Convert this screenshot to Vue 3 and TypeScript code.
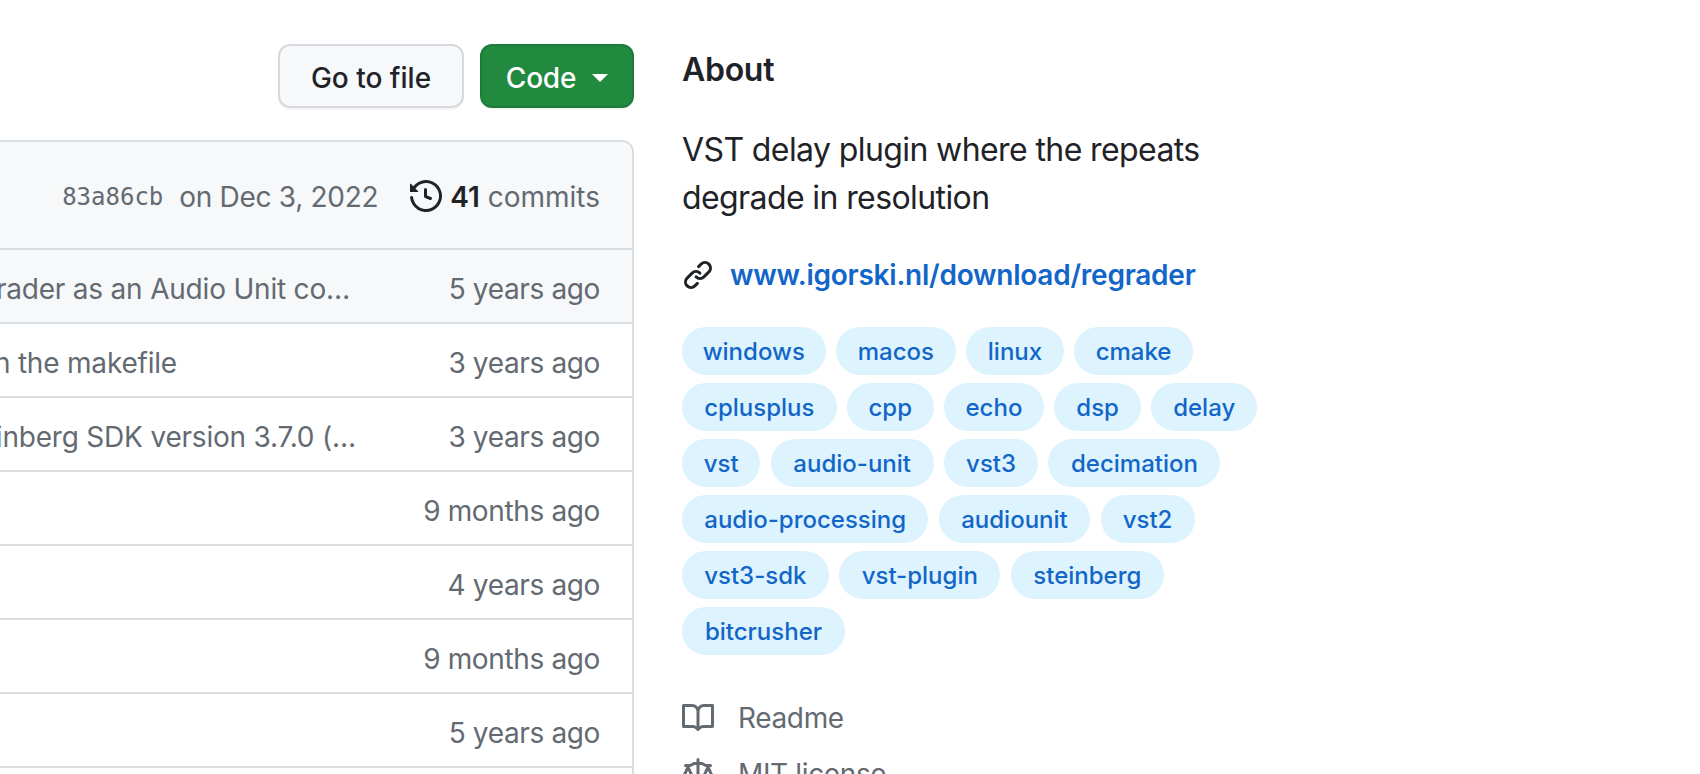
<script setup lang="ts">
interface Row { msg: string; time: string; end: number; hover?: boolean }
const rows: Row[] = [
  { msg: 'Add Regrader as an Audio Unit co…', time: '5 years ago', end: 350, hover: true },
  { msg: 'Clean up in the makefile', time: '3 years ago', end: 177 },
  { msg: 'Update to Steinberg SDK version 3.7.0 (…', time: '3 years ago', end: 356 },
  { msg: '', time: '9 months ago', end: 0 },
  { msg: '', time: '4 years ago', end: 0 },
  { msg: '', time: '9 months ago', end: 0 },
  { msg: '', time: '5 years ago', end: 0 },
  { msg: '', time: '', end: 0 },
]
const topics: [string, number][] = [
  ['windows', 143.5], ['macos', 120], ['linux', 97.4], ['cmake', 119],
  ['cplusplus', 154.6], ['cpp', 86.6], ['echo', 100], ['dsp', 86.6], ['delay', 105.7],
  ['vst', 78.3], ['audio-unit', 163], ['vst3', 94], ['decimation', 172],
  ['audio-processing', 246.4], ['audiounit', 151.4], ['vst2', 94],
  ['vst3-sdk', 146.7], ['vst-plugin', 161.4], ['steinberg', 153],
  ['bitcrusher', 163],
]
</script>

<template>
  <div class="page">
    <main class="left">
      <div class="actions">
        <button class="btn">Go to file</button>
        <button class="btn primary">Code<span class="caret"></span></button>
      </div>
      <section class="box">
        <div class="head">
          <span class="sha">83a86cb</span>
          <span class="date">on Dec 3, 2022</span>
          <svg class="hist" viewBox="0 0 16 16" width="32" height="32"><path d="m.427 1.927 1.215 1.215a8.002 8.002 0 1 1-1.6 5.685.75.75 0 1 1 1.493-.154 6.5 6.5 0 1 0 1.18-4.458l1.358 1.358A.25.25 0 0 1 3.896 6H.25A.25.25 0 0 1 0 5.75V2.104a.25.25 0 0 1 .427-.177ZM7.75 4a.75.75 0 0 1 .75.75v2.992l2.028.812a.75.75 0 0 1-.557 1.392l-2.5-1A.751.751 0 0 1 7 8.25v-3.5A.75.75 0 0 1 7.75 4Z"/></svg>
          <span class="commits"><b>41</b> commits</span>
        </div>
        <div v-for="(r, i) in rows" :key="i" class="row" :class="{ hover: r.hover }">
          <div class="msg" :style="{ width: r.end + 'px' }"><span v-if="r.msg">{{ r.msg }}</span></div>
          <div class="time">{{ r.time }}</div>
        </div>
      </section>
    </main>
    <aside class="about">
      <h2>About</h2>
      <p class="desc">VST delay plugin where the repeats degrade in resolution</p>
      <div class="link">
        <svg viewBox="0 0 16 16" width="32" height="32"><path d="m7.775 3.275 1.25-1.25a3.5 3.5 0 1 1 4.95 4.95l-2.5 2.5a3.5 3.5 0 0 1-4.95 0 .751.751 0 0 1 .018-1.042.751.751 0 0 1 1.042-.018 1.998 1.998 0 0 0 2.83 0l2.5-2.5a2.002 2.002 0 0 0-2.83-2.83l-1.25 1.25a.751.751 0 0 1-1.042-.018.751.751 0 0 1-.018-1.042Zm-4.69 9.64a1.998 1.998 0 0 0 2.83 0l1.25-1.25a.751.751 0 0 1 1.042.018.751.751 0 0 1 .018 1.042l-1.25 1.25a3.5 3.5 0 1 1-4.95-4.95l2.5-2.5a3.5 3.5 0 0 1 4.95 0 .751.751 0 0 1-.018 1.042.751.751 0 0 1-1.042.018 1.998 1.998 0 0 0-2.83 0l-2.5 2.5a1.998 1.998 0 0 0 0 2.83Z"/></svg>
        <a>www.igorski.nl/download/regrader</a>
      </div>
      <div class="topics">
        <span v-for="[t, w] in topics" :key="t" class="topic" :style="{ width: w + 'px' }">{{ t }}</span>
      </div>
      <div class="meta first">
        <svg viewBox="0 0 16 16" width="32" height="32"><path d="M0 1.75A.75.75 0 0 1 .75 1h4.253c1.227 0 2.317.59 3 1.501A3.743 3.743 0 0 1 11.006 1h4.245a.75.75 0 0 1 .75.75v10.5a.75.75 0 0 1-.75.75h-4.507a2.25 2.25 0 0 0-1.591.659l-.622.621a.75.75 0 0 1-1.06 0l-.622-.621A2.25 2.25 0 0 0 5.258 13H.75a.75.75 0 0 1-.75-.75Zm7.251 10.324.004-5.073-.002-2.253A2.25 2.25 0 0 0 5.003 2.5H1.5v9h3.757a3.75 3.75 0 0 1 1.994.574ZM8.755 4.75l-.004 7.322a3.752 3.752 0 0 1 1.992-.572H14.5v-9h-3.495a2.25 2.25 0 0 0-2.25 2.25Z"/></svg>
        <span>Readme</span>
      </div>
      <div class="meta">
        <svg viewBox="0 0 16 16" width="32" height="32"><path d="M8.75.75V2h.985c.304 0 .603.08.867.231l1.29.736c.038.022.08.033.124.033h2.234a.75.75 0 0 1 0 1.5h-.427l2.111 4.692a.75.75 0 0 1-.154.838l-.53-.53.529.531-.001.002-.002.002-.006.006-.006.005-.01.01-.045.04c-.21.176-.441.327-.686.45C14.556 10.78 13.88 11 13 11a4.498 4.498 0 0 1-2.023-.454 3.544 3.544 0 0 1-.686-.45l-.045-.04-.016-.015-.006-.006-.004-.004v-.001a.75.75 0 0 1-.154-.838L12.178 4.5h-.162c-.305 0-.604-.079-.868-.231l-1.29-.736a.245.245 0 0 0-.124-.033H8.75V13h2.5a.75.75 0 0 1 0 1.5h-6.5a.75.75 0 0 1 0-1.5h2.5V3.5h-.984a.245.245 0 0 0-.124.033l-1.289.737c-.265.15-.564.23-.869.23h-.162l2.112 4.692a.75.75 0 0 1-.154.838l-.53-.53.529.531-.001.002-.002.002-.006.006-.016.015-.045.04c-.21.176-.441.327-.686.45C4.556 10.78 3.88 11 3 11a4.498 4.498 0 0 1-2.023-.454 3.544 3.544 0 0 1-.686-.45l-.045-.04-.016-.015-.006-.006-.004-.004v-.001a.75.75 0 0 1-.154-.838L2.178 4.5H1.75a.75.75 0 0 1 0-1.5h2.234a.249.249 0 0 0 .125-.033l1.288-.737c.265-.15.564-.23.869-.23h.984V.75a.75.75 0 0 1 1.5 0Zm2.945 8.477c.285.135.718.273 1.305.273s1.02-.138 1.305-.273L13 6.327Zm-10 0c.285.135.718.273 1.305.273s1.02-.138 1.305-.273L3 6.327Z"/></svg>
        <span>MIT license</span>
      </div>
    </aside>
  </div>
</template>

<style>
html, body { margin: 0; background: #fff; overflow: hidden; }
</style>

<style scoped>
.page {
  display: flex;
  width: 1700px;
  height: 774px;
  overflow: hidden;
  font-family: Inter, "Liberation Sans", sans-serif;
  font-size: 28px;
  color: #1f2328;
  background: #fff;
}
.left { width: 634px; flex: none; padding-top: 44px; box-sizing: border-box; }
.actions { display: flex; justify-content: flex-end; gap: 16px; }
.btn {
  height: 64px;
  box-sizing: border-box;
  border: 2px solid #d6dade;
  border-radius: 12px;
  background: #f6f8fa;
  color: #1f2328;
  font: 500 28px Inter, "Liberation Sans", sans-serif;
  width: 186px;
  padding: 3px 0 0;
  box-shadow: 0 2px 0 rgba(31, 35, 40, 0.04);
}
.btn.primary {
  width: 154px;
  background: #218a3f;
  border-color: #1d7c39;
  color: #fff;
  letter-spacing: -0.2px;
  display: flex;
  align-items: center;
  justify-content: center;
}
.caret {
  margin-left: 16px;
  border-top: 8px solid #fff;
  border-left: 8px solid transparent;
  border-right: 8px solid transparent;
}
.box {
  margin-top: 32px;
  border: 2px solid #d8dde1;
  border-left: none;
  border-top-right-radius: 12px;
  background: #fff;
}
.head {
  height: 102px;
  padding: 4px 32px 0 0;
  display: flex;
  align-items: center;
  justify-content: flex-end;
  background: #f6f8fa;
  border-top-right-radius: 10px;
  color: #636a72;
}
.sha { font: 24px "DejaVu Sans Mono", "Liberation Mono", monospace; }
.date { margin-left: 16px; letter-spacing: -0.3px; }
.hist { margin-left: 32px; fill: #1f2328; position: relative; top: -1px; }
.commits { margin-left: 8px; }
.commits b { color: #1f2328; font-weight: 600; }
.row {
  height: 66px;
  padding-top: 6px;
  border-top: 2px solid #d8dde1;
  display: flex;
  align-items: center;
  justify-content: space-between;
  color: #636a72;
  letter-spacing: -0.36px;
}
.row.hover { background: #f6f8fa; }
.msg { flex: none; display: flex; justify-content: flex-end; white-space: nowrap; letter-spacing: -0.2px; }
.msg span { flex: none; }
.time { padding-right: 32px; white-space: nowrap; }
.about { width: 592px; margin-left: 48px; flex: none; }
h2 { margin: 0; padding-top: 50px; font-size: 32px; font-weight: 600; line-height: 40px; letter-spacing: -0.3px; }
.desc { margin: 36px 0 0; font-size: 32px; line-height: 48px; letter-spacing: -0.6px; width: 530px; }
.link { display: flex; align-items: center; gap: 16px; margin-top: 33px; font-weight: 600; color: #1266c8; letter-spacing: -0.24px; height: 40px; }
.link svg { fill: #1f2328; flex: none; }
.topics { display: flex; flex-wrap: wrap; gap: 8px 10.4px; margin-top: 32px; }
.topic {
  box-sizing: border-box;
  height: 48px;
  line-height: 50px;
  text-align: center;
  border-radius: 24px;
  background: #ddf3fe;
  color: #1266c8;
  font-size: 24px;
  font-weight: 500;
}
.meta { display: flex; align-items: center; gap: 24px; color: #636a72; margin-top: 14px; height: 42px; letter-spacing: -0.36px; }
.meta.first { margin-top: 42px; }
.meta svg { fill: #636a72; flex: none; }
</style>
